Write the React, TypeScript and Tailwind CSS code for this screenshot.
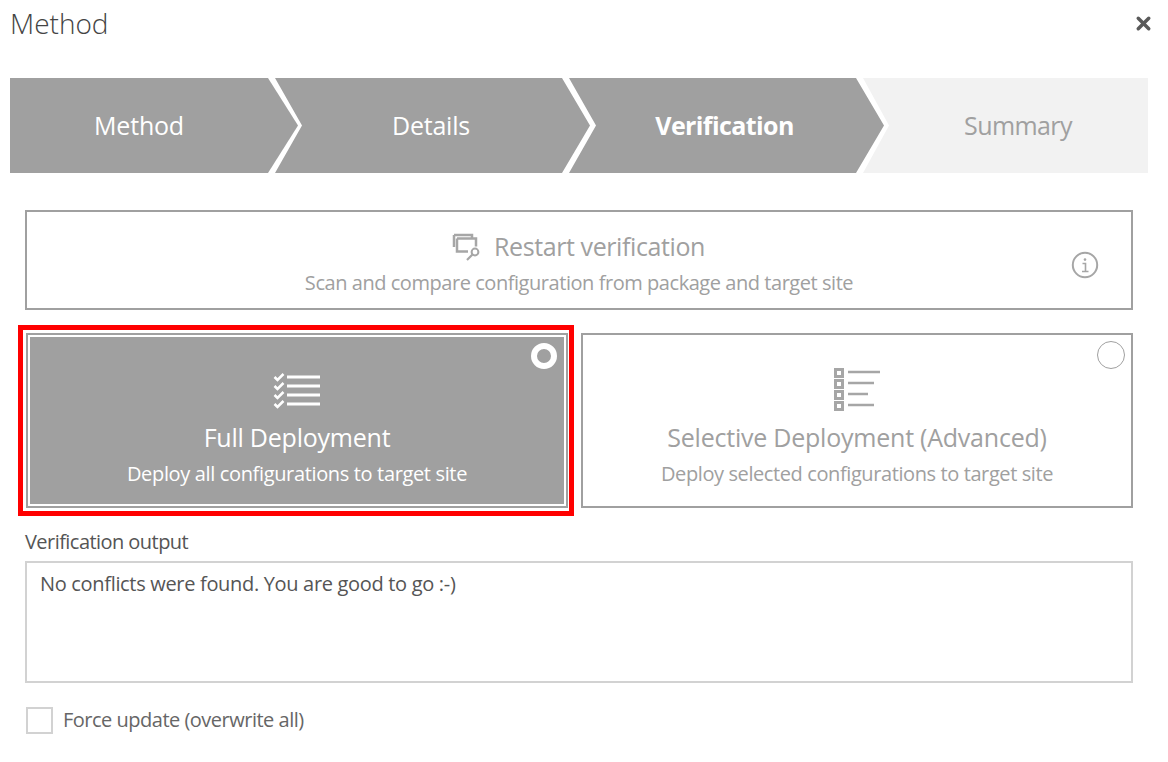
import { X } from 'lucide-react';

const font = "font-['Open_Sans','Liberation_Sans',sans-serif]";

const RestartIcon = () => (
  <svg width="30" height="30" viewBox="0 0 30 30" fill="none" stroke="#a6a6a6" strokeWidth="2.5">
    <path d="M2 4h18v3" />
    <path d="M2 4v12" strokeWidth="2.5" />
    <path d="M5 7.5h19v8M5 7.5v13h11" />
    <circle cx="23" cy="21" r="3.4" strokeWidth="2" />
    <path d="M20.5 23.5L15 29" strokeWidth="2.2" />
  </svg>
);

const InfoIcon = () => (
  <svg width="28" height="28" viewBox="0 0 28 28" fill="none" stroke="#a6a6a6">
    <circle cx="14" cy="14" r="12.2" strokeWidth="2" />
    <circle cx="14" cy="8.6" r="1.3" fill="#a6a6a6" stroke="none" />
    <path d="M11.5 12.5h3v8M11 20.5h6.5" strokeWidth="1.6" />
  </svg>
);

const ChecklistIcon = () => (
  <svg width="48" height="36" viewBox="0 0 48 36" fill="none" stroke="#ffffff">
    {[4, 13, 22, 31].map((y) => (
      <g key={y}>
        <path d={`M1.5 ${y}l3 3 6-6`} strokeWidth="2.5" />
        <path d={`M14 ${y}h33`} strokeWidth="3" />
      </g>
    ))}
  </svg>
);

const SelectiveIcon = () => (
  <svg width="48" height="44" viewBox="0 0 48 44" fill="none" stroke="#a6a6a6">
    {[1, 12, 23, 34].map((y) => (
      <rect key={y} x="2.5" y={y + 0.5} width="7" height="7" strokeWidth="3" />
    ))}
    <path d="M15 4h32M15 15h26M15 26h20M15 37h26" strokeWidth="2.5" />
  </svg>
);

export default function App() {
  return (
    <div className={`${font} h-[762px] w-[1168px] overflow-hidden bg-white`}>
      <div className="flex h-[78px] items-start justify-between pl-[10px] pr-[14px]">
        <h1 className="text-[28px] leading-[46px] font-light text-[#444]">Method</h1>
        <X className="mt-[13px] h-[21px] w-[21px] text-[#5a5a5a]" strokeWidth={4} />
      </div>

      {/* stepper */}
      <div className="ml-[10px] flex h-[95px] w-[1138px] text-[25px] leading-none tracking-[-0.2px]">
        <div className="flex w-[288px] items-center justify-center bg-[#a0a0a0] pr-[30px] text-white [clip-path:polygon(0_0,258px_0,288px_50%,258px_100%,0_100%)]">
          Method
        </div>
        <div className="-ml-[23px] flex w-[315px] items-center justify-center bg-[#a0a0a0] pr-[3px] text-white [clip-path:polygon(0_0,287px_0,315px_50%,287px_100%,0_100%,27px_50%)]">
          Details
        </div>
        <div className="-ml-[21px] flex w-[315px] items-center justify-center bg-[#a0a0a0] pr-[4px] font-bold tracking-[-0.6px] text-white [clip-path:polygon(0_0,287px_0,315px_50%,287px_100%,0_100%,27px_50%)]">
          Verification
        </div>
        <div className="-ml-[21px] flex w-[285px] items-center justify-center bg-[#f2f2f2] pl-[25px] tracking-[-0.6px] text-[#a0a0a0] [clip-path:polygon(0_0,100%_0,100%_100%,0_100%,26px_50%)]">
          Summary
        </div>
      </div>

      <div className="ml-[25px] mt-[37px] w-[1108px]">
        {/* restart */}
        <div className="relative flex h-[100px] flex-col items-center justify-center border-2 border-[#a0a0a0]">
          <div className="mt-[6px] flex items-center gap-[12px] pr-[1px]">
            <RestartIcon />
            <span className="text-[25px] leading-[34px] tracking-[-0.4px] text-[#a0a0a0]">Restart verification</span>
          </div>
          <div className="mt-[6px] text-[20px] leading-[28px] tracking-[-0.45px] text-[#a0a0a0]">
            Scan and compare configuration from package and target site
          </div>
          <div className="absolute right-[32px] top-[39px]">
            <InfoIcon />
          </div>
        </div>

        {/* deployment choice */}
        <div className="-ml-[7px] mt-[15px] flex items-start gap-[7px]">
          <div className="h-[191px] w-[556px] border-[5px] border-[#ff0000] pl-[3px] pr-[1px] pt-[3px]">
            <div className="h-[175px] border-[2px] border-[#a0a0a0] p-[2px]">
              <div className="relative flex h-[167px] flex-col items-center bg-[#a0a0a0] text-white">
                <div className="absolute right-[7px] top-[6px] h-[26px] w-[26px] rounded-full border-[6px] border-white" />
                <div className="mt-[36px]">
                  <ChecklistIcon />
                </div>
                <div className="mt-[11px] text-[25px] leading-[34px] tracking-[-0.23px]">Full Deployment</div>
                <div className="mt-[6px] text-[20px] leading-[28px] tracking-[-0.35px]">Deploy all configurations to target site</div>
              </div>
            </div>
          </div>
          <div className="relative mt-[8px] flex h-[175px] w-[552px] flex-col items-center border-2 border-[#a0a0a0] text-[#a0a0a0]">
            <div className="absolute right-[6px] top-[6px] h-[28px] w-[28px] rounded-full border border-[#a0a0a0]" />
            <div className="mt-[33px]">
              <SelectiveIcon />
            </div>
            <div className="mt-[8px] text-[25px] leading-[34px] tracking-[-0.23px]">Selective Deployment (Advanced)</div>
            <div className="mt-[6px] text-[20px] leading-[28px] tracking-[-0.4px]">Deploy selected configurations to target site</div>
          </div>
        </div>

        {/* output */}
        <div className="mt-[12px] text-[20px] leading-[27px] tracking-[-0.55px] text-[#555]">Verification output</div>
        <div className="mt-[6px] h-[122px] border-2 border-[#d2d2d2] px-[13px] py-[7px] text-[20px] leading-[28px] tracking-[-0.32px] text-[#555]">
          No conflicts were found. You are good to go :-)
        </div>

        <div className="mt-[23px] flex items-center gap-[10px] pl-[1px]">
          <div className="h-[27px] w-[27px] border-2 border-[#d2d2d2]" />
          <span className="text-[20px] leading-[28px] tracking-[-0.5px] text-[#666]">Force update (overwrite all)</span>
        </div>
      </div>
    </div>
  );
}
